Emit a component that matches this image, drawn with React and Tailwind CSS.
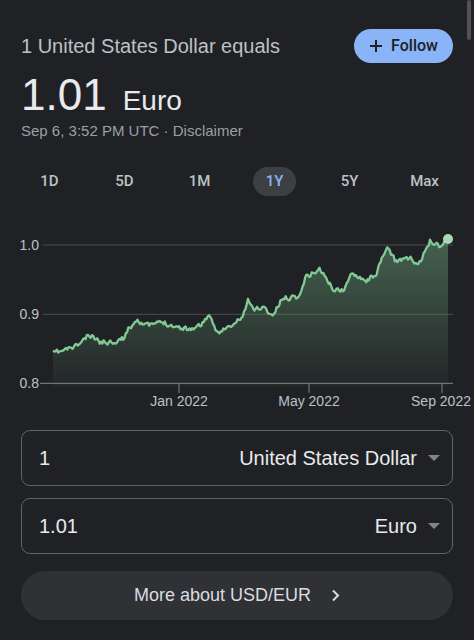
import React from 'react';

const anchors = [
  [53, 354], [63, 351.7], [77, 346.7], [87, 338], [93, 338], [100, 342.7], [110, 343],
  [123, 340], [127, 331.7], [137, 320], [147, 326.7], [163, 323], [177, 328], [190, 330],
  [200, 326.7], [208, 316.7], [217, 333], [233, 326.7], [243, 316.7], [248, 301.7],
  [253, 310], [263, 308.3], [273, 316.7], [282, 300], [300, 296.7], [305, 278.3],
  [320, 270], [333, 290], [343, 291.7], [353, 273.3], [367, 281.7], [377, 273.3],
  [387, 248.3], [395, 261.7], [410, 258.3], [418, 268.3], [430, 241.7], [440, 246.7], [448, 240],
];

const interp = (x) => {
  for (let i = 0; i < anchors.length - 1; i++) {
    const [x0, y0] = anchors[i];
    const [x1, y1] = anchors[i + 1];
    if (x >= x0 && x <= x1) return y0 + ((x - x0) / (x1 - x0)) * (y1 - y0);
  }
  return anchors[anchors.length - 1][1];
};

const buildSeries = () => {
  let seed = 11;
  const rand = () => {
    seed = (seed * 16807) % 2147483647;
    return seed / 2147483647;
  };
  const pts = [];
  let n = 0;
  for (let x = 53; x < 447; x += 1.3) {
    n = n * 0.35 + (rand() - 0.5) * 4.6;
    pts.push([x, interp(x) + n]);
  }
  pts.push([448, 240]);
  return pts;
};

const series = buildSeries();
const linePath = series.map(([x, y], i) => `${i ? 'L' : 'M'}${x.toFixed(1)} ${y.toFixed(1)}`).join(' ');
const areaPath = `${linePath} L448 388 L53 388 Z`;

const Chart = () => (
  <svg width="474" height="200" viewBox="0 215 474 200" className="block -mx-[21px]" style={{ fontFamily: '"Liberation Sans", Arial, sans-serif' }}>
    <defs>
      <linearGradient id="fillGreen" x1="0" y1="0" x2="0" y2="1">
        <stop offset="0%" stopColor="#81c995" stopOpacity="0.38" />
        <stop offset="100%" stopColor="#81c995" stopOpacity="0.03" />
      </linearGradient>
    </defs>
    <line x1="43" y1="246" x2="453" y2="246" stroke="#4a4d51" strokeWidth="1" />
    <line x1="43" y1="315.3" x2="453" y2="315.3" stroke="#4a4d51" strokeWidth="1" />
    <path d={areaPath} fill="url(#fillGreen)" />
    <line x1="40" y1="384.3" x2="453" y2="384.3" stroke="#6f7377" strokeWidth="1.2" />
    {[179, 309, 442].map((x) => (
      <line key={x} x1={x} y1="384" x2={x} y2="394" stroke="#6f7377" strokeWidth="1.2" />
    ))}
    <path d={linePath} fill="none" stroke="#81c995" strokeWidth="2.3" strokeLinejoin="round" />
    <circle cx="448" cy="240" r="5" fill="#a8dab5" />
    <g fill="#bdc1c6" fontSize="14">
      <text x="39" y="250.7" textAnchor="end">1.0</text>
      <text x="39" y="320" textAnchor="end">0.9</text>
      <text x="39" y="389" textAnchor="end">0.8</text>
      <text x="179" y="407" textAnchor="middle">Jan 2022</text>
      <text x="309" y="407" textAnchor="middle">May 2022</text>
      <text x="441" y="407" textAnchor="middle">Sep 2022</text>
    </g>
  </svg>
);

const Caret = () => (
  <svg width="12" height="6" viewBox="0 0 12 6" className="ml-[11px]">
    <path d="M0 0 L12 0 L6 6 Z" fill="#80868b" />
  </svg>
);

const tabs = ['1D', '5D', '1M', '1Y', '5Y', 'Max'];

const App = () => {
  return (
    <div className="relative min-h-[640px] bg-[#202124] px-[21px] pt-[29px] text-[#e8eaed]" style={{ fontFamily: '"Liberation Sans", Arial, sans-serif' }}>
      <div className="absolute right-[3px] top-0 h-[40px] w-[4px] rounded-full bg-[#505256]" />

      <div className="flex items-center justify-between">
        <div className="text-[20px] leading-[24px] text-[#bdc1c6]">1 United States Dollar equals</div>
        <button className="flex h-[34px] w-[99px] items-center justify-center gap-[8px] rounded-full bg-[#8ab4f8] text-[16px] font-medium text-[#202124]" style={{ fontFamily: 'Roboto, sans-serif' }}>
          <svg width="14" height="14" viewBox="0 0 14 14">
            <path d="M7 1 V13 M1 7 H13" stroke="#202124" strokeWidth="2" />
          </svg>
          Follow
        </button>
      </div>

      <div className="mt-[8px] flex items-baseline gap-[16px]">
        <span className="text-[44px] leading-[48px] text-[#e8eaed]">1.01</span>
        <span className="text-[28px] leading-[32px] text-[#e8eaed]">Euro</span>
      </div>

      <div className="mt-[2px] text-[15px] leading-[20px] text-[#9aa0a6]">Sep 6, 3:52 PM UTC · Disclaimer</div>

      <div className="-mx-[9px] mt-[26px] grid grid-cols-6" style={{ fontFamily: 'Roboto, sans-serif' }}>
        {tabs.map((t) => (
          <div key={t} className="flex justify-center">
            <div
              className={
                t === '1Y'
                  ? 'flex h-[29px] w-[43px] items-center justify-center rounded-full bg-[#3c4043] text-[15px] font-medium text-[#8ab4f8]'
                  : 'flex h-[29px] w-[43px] items-center justify-center text-[15px] font-medium text-[#bdc1c6]'
              }
            >
              {t}
            </div>
          </div>
        ))}
      </div>

      <div className="mt-[18px]">
        <Chart />
      </div>

      <div className="mt-[16px] flex h-[56px] items-center rounded-[9px] border border-[#5f6368] pl-[17px] pr-[12px]">
        <span className="flex-1 text-[20px] text-[#e8eaed]">1</span>
        <span className="text-[20px] text-[#e8eaed]">United States Dollar</span>
        <Caret />
      </div>

      <div className="mt-[12px] flex h-[56px] items-center rounded-[9px] border border-[#5f6368] pl-[17px] pr-[12px]">
        <span className="flex-1 text-[20px] text-[#e8eaed]">1.01</span>
        <span className="text-[20px] text-[#e8eaed]">Euro</span>
        <Caret />
      </div>

      <button className="mt-[17px] flex h-[49px] w-full items-center justify-center gap-[20px] rounded-full bg-[#303134] text-[18px] text-[#dadce0]">
        More about USD/EUR
        <svg width="9" height="13" viewBox="0 0 9 13">
          <path d="M2 1.5 L7 6.5 L2 11.5" fill="none" stroke="#dadce0" strokeWidth="2" />
        </svg>
      </button>
    </div>
  );
};

export default App;
